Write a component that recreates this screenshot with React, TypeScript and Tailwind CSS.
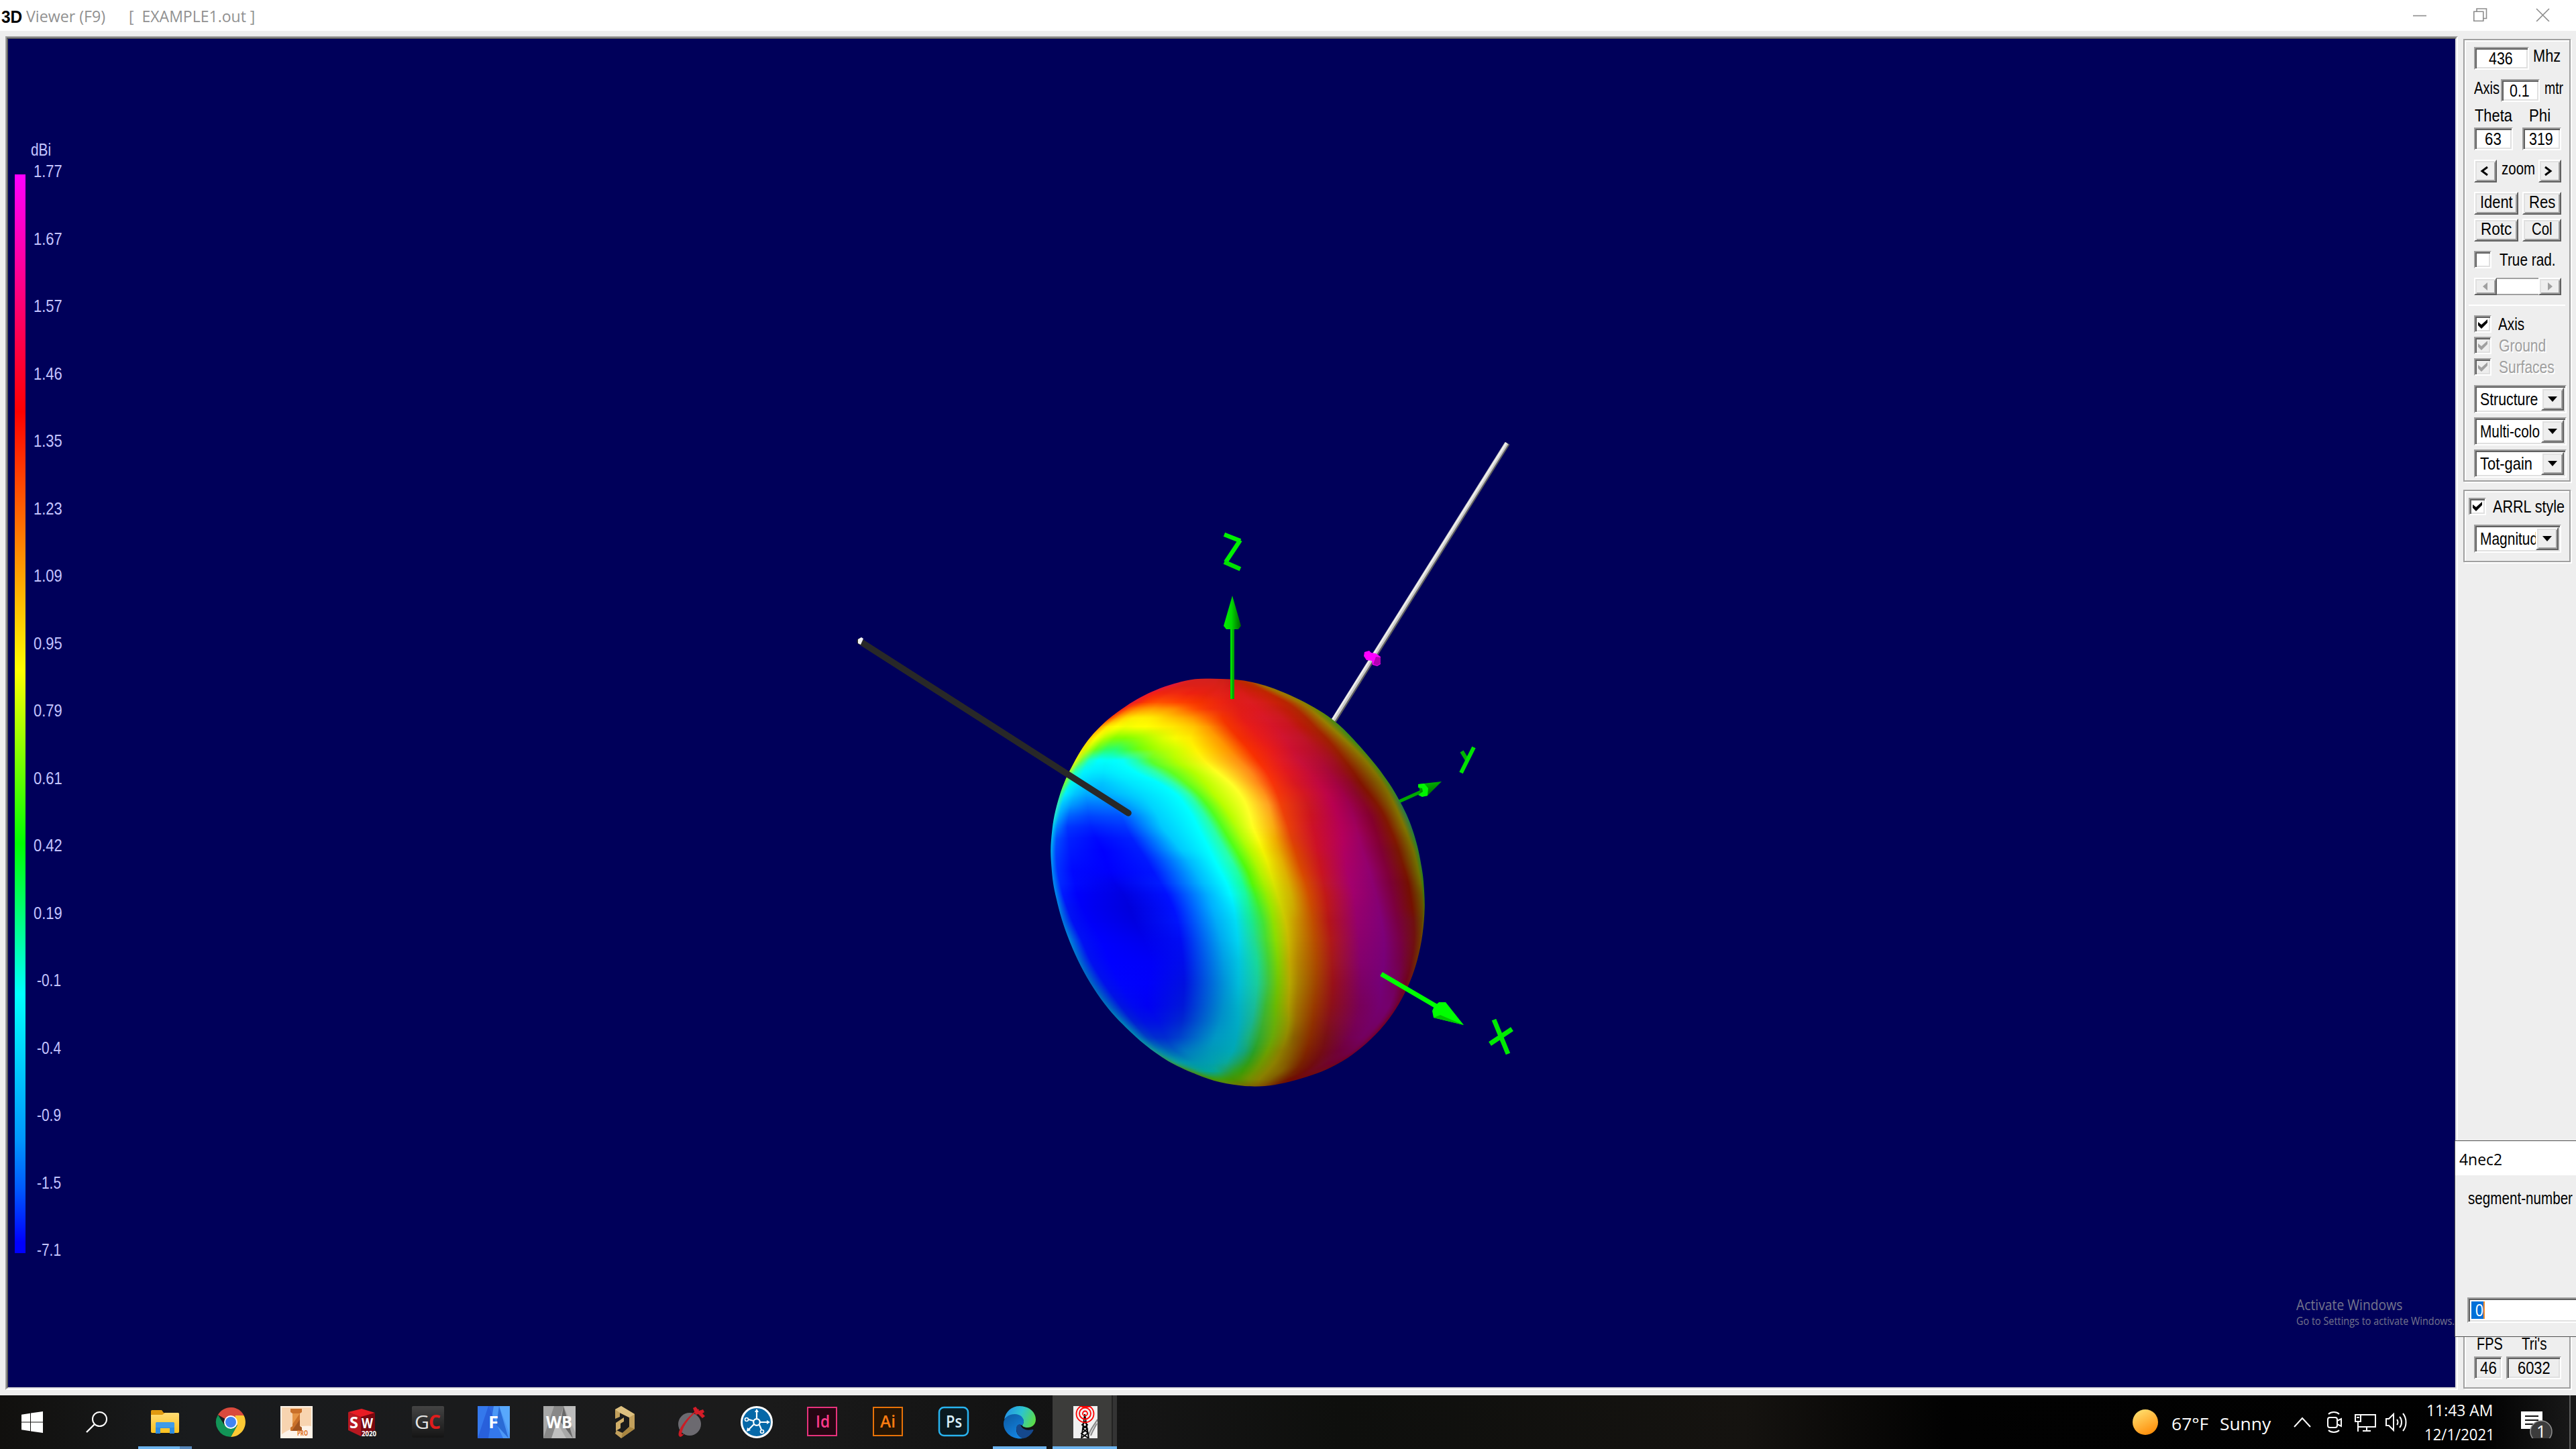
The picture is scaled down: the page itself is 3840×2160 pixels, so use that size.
import React, { useLayoutEffect, useRef, useState } from "react";

const SUNKEN =
  "border-2 border-t-[#a0a0a0] border-l-[#a0a0a0] border-r-white border-b-white shadow-[inset_2px_2px_0_#606060,inset_-2px_-2px_0_#e0e0e0]";
const RAISED =
  "border-2 border-t-white border-l-white border-r-[#606060] border-b-[#606060] shadow-[inset_2px_2px_0_#e0e0e0,inset_-2px_-2px_0_#a0a0a0] bg-[#eeeeee]";
const GROUP = "border-2 border-[#a0a0a0] shadow-[inset_2px_2px_0_#fff,2px_2px_0_#fff]";
const MS = "font-['Liberation_Sans',Arial,sans-serif] text-[25px] leading-none";
const UI = "font-['Open_Sans','Noto_Sans',sans-serif] leading-none";

/** Text condensed or stretched horizontally to an exact width. */
function Fit({ w, className = "", children }: { w: number; className?: string; children: React.ReactNode }) {
  const ref = useRef<HTMLSpanElement>(null);
  const [scale, setScale] = useState(1);
  useLayoutEffect(() => {
    if (ref.current) setScale(w / ref.current.offsetWidth);
  }, [w]);
  return (
    <span className={`block shrink-0 whitespace-pre ${className}`} style={{ width: w }}>
      <span ref={ref} className="inline-block origin-left align-top" style={{ transform: `scaleX(${scale})` }}>
        {children}
      </span>
    </span>
  );
}

/* ---------- Radiation pattern ---------- */

// Each row: y, then 20 "x:colour" stops running from the left rim to the right rim.
const ROWS: [number, string][] = [
  [30, "560:dc1838 580:d82028 600:d42020 620:d42020 640:d42020 650:d42020 660:d42020 670:d02020 680:d02020 690:d02020 700:cc2018 710:cc2018 720:c82018 735:c42018 750:bc2008 765:b82800 785:b03800 805:a85000 825:a06800 850:908000"],
  [65, "500:e01838 515:e01c30 530:e02020 550:dc2018 570:dc2018 590:dc2018 610:dc2018 630:dc2018 650:dc2018 670:dc2018 690:d82018 710:d82018 730:d41c18 750:d01c18 770:cc1c10 790:c82008 815:c02400 840:b83000 870:a06800 900:808000"],
  [100, "400:e81838 425:f01c20 450:f02410 475:f02410 500:f02810 525:f02810 550:f02410 575:ec2010 600:ec2010 625:e82010 650:e42010 680:e42018 710:e02018 750:dc1c18 790:d81c18 820:d01c10 860:c82008 895:c02400 940:a46c00 975:848400"],
  [140, "345:e81c30 375:f42810 400:fc3c00 425:ff4800 450:ff5000 475:ff4c00 500:ff4800 530:ff4000 560:fc3c00 590:f83400 620:f43000 660:f02c08 700:ec2410 760:e01c18 820:dc1c20 870:d41c18 920:c82008 965:b82400 1015:a07000 1045:788800"],
  [170, "305:f02018 335:ff6000 360:ff8400 395:ff9800 430:ffa000 460:ff9800 490:ff9400 520:ff8800 550:ff7000 580:ff5800 610:fc4400 660:f43008 710:ec2810 780:e01c18 850:dc1820 910:cc1c18 960:c01c08 1005:b02800 1060:987800 1090:688800"],
  [210, "255:ff3800 285:ff9c00 315:ffd400 350:ffec00 390:fff000 420:ffec00 450:ffe000 480:ffd000 515:ffc000 550:ffb000 590:ff9800 640:ff6c00 710:f43400 790:e41c18 880:d81828 950:cc1820 1000:bc1c08 1045:ac2400 1105:988000 1138:508810"],
  [250, "215:ff9000 245:ffec00 280:ffff00 320:f0ff00 360:fcff00 400:ffff00 435:fff800 470:fff000 510:ffe800 550:ffd800 595:ffc400 650:ff9800 735:f43400 820:e81c18 920:d41428 985:c81420 1035:b81808 1080:a82400 1145:948000 1185:408818"],
  [300, "172:ffc800 200:fcff00 235:b4ff00 275:84ff00 315:80ff00 355:90ff00 395:a8ff00 435:c4ff00 475:e0ff00 520:f8fc00 580:ffec00 690:ff9800 775:f43000 860:e81c18 960:d01430 1030:c01428 1080:b01810 1125:a02000 1195:908000 1230:348818"],
  [350, "140:ffe000 168:c8ff00 200:68ff18 240:30ff60 280:28ff70 320:40ff40 365:68ff10 410:8cff00 460:b0ff00 525:d0ff00 600:fff400 730:ff9400 815:f83000 900:e81c18 990:cc1030 1070:b81028 1120:a81418 1165:982000 1242:8c7c00 1276:348818"],
  [400, "115:f8f800 142:70ff40 172:18ffc8 210:00ffff 245:00fff8 275:00ffff 310:08fff8 360:20ffb0 420:58ff30 520:b0ff00 635:fff410 775:ff8c10 850:f83000 935:e41c20 1020:c81038 1105:b00c30 1155:a01020 1200:901c00 1285:887800 1318:308818"],
  [450, "90:c0ff10 115:28ffb0 150:00f4ff 190:00ecff 230:00e8ff 280:00f0ff 355:00ffff 435:30ffa8 500:60ff20 590:b4ff00 685:ffff20 820:ff8818 885:f83008 970:e01820 1060:c40c38 1135:a80838 1185:980c20 1235:881800 1320:847400 1352:308818"],
  [500, "72:80ff28 98:00f8e8 135:00dcff 175:00ccff 225:00c4ff 330:00e4ff 450:00fcff 510:30ffa8 560:60ff20 640:b8ff00 740:ffff28 850:ff8818 910:f83408 1000:d81820 1095:c00840 1165:a40440 1218:900828 1265:801400 1353:807000 1382:308820"],
  [550, "52:48ff60 76:00ecff 115:00c4ff 160:00a8ff 220:00a8ff 390:00dcff 520:00ffff 570:30ffa8 610:58ff20 675:b8ff00 780:ffff28 878:ff9018 930:f43808 1035:d41820 1130:bc0448 1195:a00048 1250:880828 1300:801400 1380:807000 1410:288830"],
  [600, "38:40f8b0 62:00c4ff 100:0098ff 165:0074ff 260:0078ff 420:00d4ff 558:00ffff 608:28ffa8 648:50ff20 712:b8ff00 805:ffff28 895:ffa020 945:f04008 1055:cc1820 1155:b80050 1220:9c0050 1282:880428 1335:801800 1404:807400 1430:287840"],
  [650, "30:20f0d0 52:00a4ff 90:0060ff 170:0044ff 300:0050ff 450:00d0ff 588:00ffff 640:28ffa8 680:50ff20 740:b4ff00 820:ffff28 905:fca818 960:ec4008 1065:cc1420 1175:b40054 1235:9c0058 1305:84002c 1362:801800 1424:807400 1452:287848"],
  [700, "22:00e0ec 42:0080ff 85:0034ff 180:0020ff 320:0034ff 468:00c8ff 610:00ffff 668:28ffa8 708:50ff20 765:b0ff08 832:ffff20 914:f8ac10 975:e84008 1075:cc1028 1187:b40058 1247:a0005c 1322:84002c 1382:801800 1443:807400 1470:287840"],
  [750, "18:00c8f0 40:0050ff 90:0020ff 200:0008ff 345:0020ff 505:00c8ff 633:00ffff 694:28ffa8 735:50ff18 790:b0ff08 852:fcfc10 922:f0ac00 988:e04008 1085:cc1028 1194:b4005c 1260:9c0064 1336:840030 1402:801800 1461:787000 1485:288030"],
  [800, "16:00b8f0 38:0044ff 95:0018ff 225:0000ff 375:001cff 540:00c8ff 656:00ffff 720:28ffa8 762:50ff18 816:b0fc00 870:f4f400 934:e8ac00 1002:dc4400 1092:cc1028 1200:b00060 1272:980068 1348:800034 1418:781800 1478:787000 1498:288028"],
  [850, "17:00a8f0 40:0038ff 100:0010ff 240:0000ff 405:0018ff 572:00b8ff 678:00ffff 746:28ffa8 788:50fc10 840:b0f800 888:ecf000 948:e4b000 1015:d84800 1100:c81420 1206:ac0064 1288:94006c 1360:800038 1432:781800 1490:707000 1508:288028"],
  [900, "20:0098f0 45:0030ff 105:0008ff 255:0000fc 430:0014ff 602:00b8ff 702:00ffff 770:20ffa0 812:54f808 860:b0f400 902:e4e800 962:deb000 1030:d84800 1108:c81420 1214:a80068 1302:900070 1375:800038 1446:781400 1500:6c7000 1515:288020"],
  [950, "27:0090e8 55:0028ff 115:0008ff 275:0000ec 460:001cff 630:00bcff 725:00fcff 788:18ff98 828:54f808 876:a8f000 916:d8e400 975:d8b000 1045:d44c00 1116:c41820 1226:a4006c 1314:8c0070 1385:7c0038 1458:741000 1508:6c6800 1520:308010"],
  [1000, "36:0090e8 66:0018ff 125:0000fc 310:0000e0 485:0010ff 650:00b0ff 742:00f8ff 802:18f8a0 842:44f420 888:98ec00 930:d0dc00 986:d0b000 1057:d04c00 1125:c01818 1238:a0006c 1328:880070 1394:7c003c 1466:741000 1513:685800 1524:308010"],
  [1060, "48:0088e0 84:0014f4 145:0000f8 335:0000dc 510:0010ff 668:00b0ff 755:00e8fc 814:18f098 858:40ec30 904:94e800 948:ccd000 996:cca800 1067:c84c00 1132:bc1818 1246:98006c 1340:840074 1405:7c003c 1474:741000 1516:685000 1526:407800"],
  [1120, "62:0080d8 105:0010f4 175:0000f8 355:0000e0 528:0014fc 684:00acf8 763:00dcf4 826:18e890 872:40e438 914:90e000 963:ccc400 1003:c89800 1075:c04c00 1138:b41418 1252:94006c 1350:800078 1415:780040 1480:701010 1512:684000 1524:606800"],
  [1200, "90:0088d8 140:0010f4 220:0000fc 390:0000ec 540:000cf4 702:00a8f0 770:00d4f0 838:20dc90 884:48dc30 924:8cdc00 974:c8b800 1010:c09000 1082:b84c00 1146:b01818 1260:8c006c 1360:7c0078 1425:780044 1482:701010 1508:703800 1518:706000"],
  [1300, "128:0078c8 180:0010f0 255:0000ff 420:0000f8 550:000cec 712:009ce4 774:00c4e0 848:18d898 893:44d034 932:80d000 980:c0a800 1014:b48400 1088:ac4800 1150:a41818 1266:84006c 1360:780078 1425:740048 1470:700c14 1492:703000 1502:785000"],
  [1400, "178:006cc0 235:0010ec 300:0004fc 405:0000fc 555:0010e0 714:0090d8 774:00bcd8 848:18cc9c 893:40c440 932:74c400 980:b4a800 1014:a88000 1085:a04400 1154:981018 1268:7c0064 1350:740078 1410:740058 1445:700020 1460:701018 1470:703000"],
  [1500, "240:0078b8 300:0014e0 350:0008f0 410:0000f4 550:0018d8 712:0090cc 773:00b0c8 838:18bc98 883:3cb830 925:6cb800 976:a89c00 1008:a07400 1080:983800 1148:8c1018 1262:780058 1340:740070 1380:74006c 1400:70004c 1415:700020 1425:701000"],
  [1570, "300:0080b8 350:0020d4 395:0010e4 450:0010e4 545:0028d0 700:0090c8 772:00acc4 828:18b490 872:3cb030 920:68b008 976:989400 1005:986c00 1074:903000 1138:84101c 1248:780058 1310:740068 1340:740068 1355:740050 1365:740030 1380:701010"],
  [1640, "365:0088b0 405:0040c4 440:002cd0 480:002cd0 535:0040cc 680:0098c4 764:00a8bc 812:18b080 856:30a830 910:68a808 965:908800 995:886000 1062:882c00 1125:781014 1220:740050 1270:740060 1290:740058 1305:740040 1315:740028 1325:701010"],
  [1700, "430:189890 460:0080b0 490:0068b8 520:0060c0 560:0078c0 660:0098b8 750:00a8b4 800:14a478 836:28a028 890:6ca000 945:8c7c00 985:885c00 1048:802400 1110:740c14 1175:700038 1220:700048 1235:700048 1245:700038 1255:700028 1265:700c10"],
  [1750, "500:309850 520:10a090 550:0098ac 585:0094b0 620:0098b0 670:00a0b0 725:08a89c 780:20a050 815:309c18 865:6c9800 920:8c8000 970:845800 1030:782000 1080:700c10 1120:700828 1145:700030 1160:700030 1170:700030 1180:700020 1190:700c10"],
  [1790, "570:448820 590:309840 615:10a080 640:00a498 665:00a4a0 690:08a88c 720:1ca060 755:2ca028 790:389c08 840:6c9400 890:8a8000 945:846000 1000:742000 1040:700c08 1060:700a18 1075:700a18 1085:700a18 1095:700a18 1105:700a18 1120:700c10"],
  [1825, "640:588000 655:508808 670:409808 685:3c9c10 700:3c9c10 715:3c9c08 735:409800 755:449400 780:509400 815:709000 860:888000 905:806000 950:743000 975:701400 990:700c00 1000:700a08 1010:700a08 1020:700a08 1030:700c08 1045:701000"],
  [1862, "730:706800 740:707000 750:747000 760:786c00 770:7c6c00 780:7c6c00 790:806800 800:806800 815:806400 830:806000 850:805800 870:804800 890:783800 905:702400 920:701800 930:701400 940:701400 950:701400 960:701400 970:701400"],
];

const TABLE = ROWS.map(([y, s]) => ({
  y,
  v: s.split(" ").map((t) => {
    const [x, c] = t.split(":");
    return [Number(x), parseInt(c.slice(0, 2), 16), parseInt(c.slice(2, 4), 16), parseInt(c.slice(4, 6), 16)];
  }),
}));

function sampleRow(y: number) {
  let i = 0;
  while (i < TABLE.length - 2 && TABLE[i + 1].y < y) i++;
  const a = TABLE[i];
  const b = TABLE[i + 1];
  const p = TABLE[Math.max(0, i - 1)];
  const n = TABLE[Math.min(TABLE.length - 1, i + 2)];
  const h = b.y - a.y;
  const t = Math.min(1, Math.max(0, (y - a.y) / h));
  return a.v.map((s, k) =>
    s.map((av, c) => {
      const bv = b.v[k][c];
      if (c > 0) return Math.round(av + (bv - av) * t);
      const ma = ((bv - p.v[k][c]) / (b.y - p.y)) * h;
      const mb = ((n.v[k][c] - av) / (n.y - a.y)) * h;
      const t2 = t * t;
      const t3 = t2 * t;
      return (2 * t3 - 3 * t2 + 1) * av + (t3 - 2 * t2 + t) * ma + (-2 * t3 + 3 * t2) * bv + (t3 - t2) * mb;
    })
  );
}

const RIM: [number, number][] = [
  [600, 37], [515, 57], [440, 86], [380, 118], [320, 158], [250, 215], [190, 280], [145, 345], [110, 412], [77, 485],
  [52, 560], [32, 645], [22, 720], [17, 800], [20, 875], [27, 950], [40, 1020], [62, 1113], [95, 1215], [138, 1320],
  [190, 1420], [250, 1512], [320, 1595], [400, 1675], [490, 1745], [600, 1803], [700, 1840], [800, 1857], [880, 1857],
  [960, 1843], [1050, 1815], [1130, 1782], [1215, 1730], [1290, 1665], [1360, 1585], [1420, 1490], [1465, 1390],
  [1495, 1290], [1515, 1180], [1524, 1060], [1520, 950], [1512, 880], [1496, 790], [1475, 710], [1450, 640],
  [1420, 575], [1382, 505], [1330, 425], [1265, 340], [1195, 258], [1135, 203], [1060, 152], [980, 108], [900, 73],
  [830, 51], [760, 39], [680, 35],
];

function smoothClosed(pts: [number, number][]) {
  const n = pts.length;
  let d = `M${pts[0][0]} ${pts[0][1]}`;
  for (let i = 0; i < n; i++) {
    const p0 = pts[(i - 1 + n) % n];
    const p1 = pts[i];
    const p2 = pts[(i + 1) % n];
    const p3 = pts[(i + 2) % n];
    d += `C${p1[0] + (p2[0] - p0[0]) / 6} ${p1[1] + (p2[1] - p0[1]) / 6} ${p2[0] - (p3[0] - p1[0]) / 6} ${p2[1] - (p3[1] - p1[1]) / 6} ${p2[0]} ${p2[1]}`;
  }
  return d + "Z";
}

const STRIPS = Array.from({ length: 306 }, (_, i) => {
  const y = 30 + i * 6;
  return { y, stops: sampleRow(y + 3) };
});

function Pattern() {
  return (
    <svg x={340} y={380} width={580} height={630} viewBox="0 0 1568 1890" preserveAspectRatio="none">
      <defs>
        <clipPath id="rim">
          <path d={smoothClosed(RIM)} />
        </clipPath>
        {STRIPS.map((s) => (
          <linearGradient key={s.y} id={`s${s.y}`} gradientUnits="userSpaceOnUse" x1={0} y1={0} x2={1568} y2={0}>
            {s.stops.map((c, k) => (
              <stop key={k} offset={c[0] / 1568} stopColor={`rgb(${c[1]},${c[2]},${c[3]})`} />
            ))}
          </linearGradient>
        ))}
      </defs>
      <g clipPath="url(#rim)">
        {STRIPS.map((s) => (
          <rect key={s.y} x={0} y={s.y} width={1568} height={6} fill={`url(#s${s.y})`} shapeRendering="crispEdges" />
        ))}
      </g>
    </svg>
  );
}

function Scene() {
  return (
    <svg className="absolute left-[1210px] top-[564px] h-[1040px] w-[1100px]" viewBox="0 0 1100 1040">
      <defs>
        <linearGradient id="coneZ">
          <stop offset="0" stopColor="#00f000" />
          <stop offset="0.45" stopColor="#00d800" />
          <stop offset="1" stopColor="#006000" />
        </linearGradient>
        <linearGradient id="coneY" x1="0" y1="0" x2="0.4" y2="1">
          <stop offset="0" stopColor="#00c800" />
          <stop offset="1" stopColor="#006800" />
        </linearGradient>
      </defs>
      {/* far wire with its source marker */}
      <line x1={1027.5} y1={41} x2={768.5} y2={455} stroke="#606060" strokeWidth={7} />
      <line x1={1026} y1={40.5} x2={767} y2={454} stroke="#c8c8c8" strokeWidth={6} />
      <line x1={1025.5} y1={40} x2={766} y2={453} stroke="#f0f0f0" strokeWidth={2.5} />
      <path d="M814 352l7-2 3 3 7 1 7 5v11l-5 3-7-2-1-6-8-1-4-6z" fill="#ff00ff" />
      <path d="M831 359l7 1v9l-5 3-6-2z" fill="#b400b4" />
      {/* Y axis */}
      <line x1={863} y1={576} x2={903} y2={558} stroke="#00a800" strokeWidth={5} />
      <path d="M894 549l8-1 27-3-22 22-8 0z" fill="url(#coneY)" />
      <path d="M894 549l9-1 6 7-1 11-8 2-6-3 7-5-1-5-6-1z" fill="#00f400" />
      <g stroke="#00e400" strokeWidth={6}>
        <line x1={959} y1={500} x2={967} y2={513} stroke="#00b400" />
        <line x1={977} y1={494} x2={958} y2={532} />
      </g>
      <Pattern />
      {/* near wire */}
      <line x1={62} y1={336} x2={462} y2={592} stroke="#282828" strokeWidth={9.5} strokeLinecap="round" />
      <path d="M59 333l5-3 3 2-4 9-4-2z" fill="#f0f0f0" />
      {/* Z axis */}
      <rect x={614} y={317} width={6} height={105} fill="#00a400" />
      <rect x={614} y={317} width={3} height={105} fill="#00dc00" />
      <path d="M617 268l13 45-4 5h-18l-4-5z" fill="url(#coneZ)" />
      <g stroke="#00f000" strokeWidth={6.5} strokeLinecap="square">
        <line x1={608} y1={178} x2={626} y2={185} />
        <line x1={627} y1={188} x2={609} y2={215} />
        <line x1={608} y1={219} x2={626} y2={227} stroke="#00e000" />
      </g>
      {/* X axis */}
      <line x1={839} y1={832} x2={921} y2={880} stroke="#00ff00" strokeWidth={7} />
      <path d="M925 874h10l27 34-45-11-2-10 3-7z" fill="#00ff00" />
      <path d="M917 897l45 11-35-15z" fill="#00c400" />
      <g stroke="#00ec00" strokeWidth={7}>
        <line x1={1007} y1={900} x2={1028} y2={951} />
        <line x1={1034} y1={914} x2={1001} y2={936} />
      </g>
    </svg>
  );
}

const SCALE = ["1.77", "1.67", "1.57", "1.46", "1.35", "1.23", "1.09", "0.95", "0.79", "0.61", "0.42", "0.19", "-0.1", "-0.4", "-0.9", "-1.5", "-7.1"];

function Viewer() {
  return (
    <div className="relative mt-2 ml-2 h-[2018px] w-[3656px] shrink-0 border-2 border-t-[#a0a0a0] border-l-[#a0a0a0] border-r-white border-b-white">
      <div className="h-full w-full border-2 border-t-[#606060] border-l-[#606060] border-r-[#e0e0e0] border-b-[#e0e0e0] bg-[#00005a]">
        <div className={`flex flex-col pt-[153px] text-[#c4c4ff] ${MS}`}>
          <Fit w={30} className="ml-[34px]">dBi</Fit>
          <div className="mt-[7px] flex">
            <div className="mt-[17px] ml-[10px] h-[1608px] w-4 bg-[linear-gradient(#ff00ff,#ff0000_22%,#ffff00_46%,#00ff00_62%,#00ffff_76%,#0096ff_89.5%,#005aff_94%,#0000ff_99%)]" />
            <div className="ml-[12px] flex flex-col">
              {SCALE.map((s) => (
                <div key={s} className="h-[100.5px]">
                  <Fit w={s[0] === "-" ? 36 : 43} className={s[0] === "-" ? "ml-[5px]" : "ml-0"}>{s}</Fit>
                </div>
              ))}
            </div>
          </div>
        </div>
      </div>
      <div className="absolute top-0 left-0">
        <Scene />
      </div>
      <div className={`absolute top-[1879px] left-[3413px] text-[#74748c] ${UI}`}>
        <Fit w={158} className="text-[21px]">Activate Windows</Fit>
        <Fit w={236} className="mt-[5px] text-[16px]">Go to Settings to activate Windows.</Fit>
      </div>
    </div>
  );
}

/* ---------- Classic controls ---------- */

function Field({ box, w, children }: { box: string; w: number; children: React.ReactNode }) {
  return (
    <div className={`flex h-[34px] shrink-0 items-center justify-center bg-white pr-0.5 ${box} ${SUNKEN}`}>
      <Fit w={w}>{children}</Fit>
    </div>
  );
}

function Btn({ box, w, children }: { box: string; w: number; children: React.ReactNode }) {
  return (
    <div className={`flex h-[34px] shrink-0 items-center justify-center pb-1 ${box} ${RAISED}`}>
      <Fit w={w}>{children}</Fit>
    </div>
  );
}

function Check({ on = true, off = false, w, gap = "ml-3", children }: { on?: boolean; off?: boolean; w: number; gap?: string; children: React.ReactNode }) {
  return (
    <div className={`flex items-center ${off ? "text-[#a0a0a0]" : "text-black"}`}>
      <div className={`flex h-[26px] w-[26px] shrink-0 items-center justify-center ${off ? "bg-[#eeeeee]" : "bg-white"} ${SUNKEN}`}>
        {on && (
          <svg className="h-[14px] w-[14px]" viewBox="0 0 14 14">
            <path d="M0 4l5 4 9-8v5l-9 9-5-5z" fill="currentColor" />
          </svg>
        )}
      </div>
      <Fit w={w} className={`${gap} ${off ? "[text-shadow:2px_2px_0_#fff]" : ""}`}>{children}</Fit>
    </div>
  );
}

function Select({ box, w, children }: { box: string; w: number; children: React.ReactNode }) {
  return (
    <div className={`flex h-[42px] items-stretch bg-white p-0.5 ${box} ${SUNKEN}`}>
      <div className="flex min-w-0 flex-1 items-center overflow-hidden pl-[5px]">
        <Fit w={w} className="h-[30px] pt-[3px]">{children}</Fit>
      </div>
      <div className={`flex w-[34px] shrink-0 items-center justify-center ${RAISED}`}>
        <svg className="h-2 w-[14px]" viewBox="0 0 14 8">
          <path d="M0 0h14L7 8z" fill="#000" />
        </svg>
      </div>
    </div>
  );
}

function SidePanel() {
  return (
    <div className={`ml-2 flex w-[160px] shrink-0 flex-col pt-[12px] text-black ${MS}`}>
      <div className={`flex h-[660px] shrink-0 flex-col pt-[10px] pl-[14px] ${GROUP}`}>
        <div className="flex h-[34px]">
          <Field box="w-[82px]" w={36}>436</Field>
          <Fit w={41} className="mt-px ml-[6px]">Mhz</Fit>
        </div>
        <div className="mt-[14px] flex h-[34px]">
          <Fit w={38} className="mt-px">Axis</Fit>
          <Field box="ml-[2px] w-[58px]" w={30}>0.1</Field>
          <Fit w={28} className="mt-px ml-[7px]">mtr</Fit>
        </div>
        <div className="mt-[8px] flex h-[24px]">
          <Fit w={56} className="ml-[1px]">Theta</Fit>
          <Fit w={32} className="ml-[25px]">Phi</Fit>
        </div>
        <div className="mt-[6px] flex gap-[14px]">
          <Field box="w-[58px]" w={25}>63</Field>
          <Field box="w-[58px]" w={36}>319</Field>
        </div>
        <div className="mt-[14px] flex">
          <div className={`flex h-[34px] w-[34px] items-center justify-center pr-1 ${RAISED}`}>
            <svg className="h-4 w-3" viewBox="0 0 12 16"><path d="M11 2L3 8l8 6" fill="none" stroke="#000" strokeWidth="3" /></svg>
          </div>
          <Fit w={50} className="mt-px ml-[7px]">zoom</Fit>
          <div className={`ml-[5px] flex h-[34px] w-[34px] items-center justify-center pr-1 ${RAISED}`}>
            <svg className="h-4 w-3" viewBox="0 0 12 16"><path d="M1 2l8 6-8 6" fill="none" stroke="#000" strokeWidth="3" /></svg>
          </div>
        </div>
        <div className="mt-[14px] flex gap-[6px]">
          <Btn box="w-[66px]" w={49}>Ident</Btn>
          <Btn box="w-[58px]" w={39}>Res</Btn>
        </div>
        <div className="mt-[6px] flex gap-[6px]">
          <Btn box="w-[66px]" w={46}>Rotc</Btn>
          <Btn box="w-[58px]" w={31}>Col</Btn>
        </div>
        <div className="mt-[14px]">
          <Check on={false} w={84}>True rad.</Check>
        </div>
        <div className="mt-[14px] flex h-[26px] w-[130px]">
          <div className={`flex w-[34px] items-center justify-center ${RAISED}`}>
            <svg className="h-3 w-2" viewBox="0 0 8 12"><path d="M7 0v12L0 6z" fill="#a0a0a0" /></svg>
          </div>
          <div className="flex-1 border-y-2 border-t-[#a0a0a0] border-b-[#a0a0a0] bg-white" />
          <div className={`flex w-[34px] items-center justify-center ${RAISED}`}>
            <svg className="h-3 w-2" viewBox="0 0 8 12"><path d="M1 0v12l7-6z" fill="#a0a0a0" /></svg>
          </div>
        </div>
        <div className="mt-[14px] -ml-2 h-[2px] w-[144px] shrink-0 bg-white" />
        <div className="mt-[14px] flex flex-col gap-[6px]">
          <Check w={39} gap="ml-[10px]">Axis</Check>
          <Check off w={70} gap="ml-[11px]">Ground</Check>
          <Check off w={83} gap="ml-[11px]">Surfaces</Check>
        </div>
        <div className="mt-[14px] flex flex-col gap-[6px]">
          <Select box="w-[138px]" w={86}>Structure</Select>
          <Select box="w-[138px]" w={89}>Multi-colo</Select>
          <Select box="w-[138px]" w={78}>Tot-gain</Select>
        </div>
      </div>
      <div className={`mt-[12px] flex h-[108px] shrink-0 flex-col pt-[10px] pl-[6px] ${GROUP}`}>
        <Check w={107} gap="ml-[10px]">ARRL style</Check>
        <div className="mt-[14px] ml-2">
          <Select box="w-[130px]" w={98}>Magnitude</Select>
        </div>
      </div>
      <div className={`mt-[1112px] flex h-[120px] shrink-0 flex-col pt-[39px] pl-[14px] ${GROUP}`}>
        <div className="flex h-[25px]">
          <Fit w={39} className="ml-1">FPS</Fit>
          <Fit w={38} className="ml-[28px]">Tri's</Fit>
        </div>
        <div className="mt-[6px] flex gap-[6px]">
          <div className={`flex h-[34px] w-[42px] items-center justify-center ${SUNKEN}`}>
            <Fit w={25}>46</Fit>
          </div>
          <div className={`flex h-[34px] w-[82px] items-center justify-center ${SUNKEN}`}>
            <Fit w={49}>6032</Fit>
          </div>
        </div>
      </div>
    </div>
  );
}

function SegmentDialog() {
  return (
    <div className="absolute top-[1700px] left-[3659px] h-[293px] w-[181px] overflow-hidden border-y border-l border-[#505050] bg-[#eeeeee]">
      <div className={`h-[51px] bg-white pt-[15px] pl-[6px] text-[24px] text-black ${UI}`}>
        <Fit w={64}>4nec2</Fit>
      </div>
      <div className={`pt-[22px] pl-[19px] text-black ${MS}`}>
        <Fit w={156}>segment-number</Fit>
      </div>
      <div className={`mt-[135px] ml-[18px] flex h-[38px] w-[260px] items-center bg-white pl-1 text-white ${MS} ${SUNKEN}`}>
        <div className="flex h-[26px] w-[18px] items-center justify-end bg-[#0070d8]">
          <Fit w={12}>0</Fit>
        </div>
        <div className="h-[26px] w-[2px] bg-[#ff8c28]" />
      </div>
    </div>
  );
}

function TitleBar() {
  return (
    <div className={`flex h-[46px] shrink-0 items-start bg-white text-[24px] text-[#919191] ${UI}`}>
      <Fit w={31} className="mt-[12px] ml-[2px] font-['Liberation_Sans',Arial,sans-serif] text-[26px] font-bold text-black">3D</Fit>
      <Fit w={118} className="mt-[12px] ml-[6px]">Viewer (F9)</Fit>
      <Fit w={188} className="mt-[12px] ml-[35px]">{"[  EXAMPLE1.out ]"}</Fit>
      <div className="flex-1" />
      <svg className="mt-[12px] h-5 w-[208px] shrink-0" viewBox="0 0 208 20" fill="none" stroke="#8c8c8c" strokeWidth="1.6">
        <path d="M1 11.5h20" />
        <path d="M91.8 5.2h14v14h-14zM96 5V1h14.500v14.500h-4.500" />
        <path d="M185 1l19 19M204 1l-19 19" />
      </svg>
      <div className="w-[36px]" />
    </div>
  );
}

/* ---------- Taskbar ---------- */

function Task({ children, cls = "" }: { children: React.ReactNode; cls?: string }) {
  return <div className={`relative flex h-20 w-[98px] shrink-0 items-center justify-center ${cls}`}>{children}</div>;
}

const ICON = "h-12 w-12 shrink-0 overflow-visible";
const OS = "'Open Sans','Noto Sans',sans-serif";

function Taskbar() {
  return (
    <div className="relative flex h-20 shrink-0 bg-[linear-gradient(90deg,#11100e_0,#191b1d_280px,#1b1b1b_1100px,#131313_1500px,#151515_1700px,#0e0f0d_2000px,#151310_2600px,#020202_2900px,#010101_3700px,#181818_3830px)]">
      <Task cls="pr-0.5">
        <svg className="h-8 w-8" viewBox="0 0 32 32" fill="#fff">
          <path d="M0 4.800l13-2v12.700H0zM14 2.600L32 0v15.500H14zM0 16.500h13v12.700l-13-2zM14 16.500h18V32l-18-2.600z" />
        </svg>
      </Task>
      <Task cls="pr-1.5">
        <svg className="h-8 w-8" viewBox="0 0 32 32" fill="none" stroke="#fff" strokeWidth="2">
          <circle cx="20.500" cy="11.500" r="10.500" />
          <path d="M13 19L1 31" strokeWidth="2.400" />
        </svg>
      </Task>
      <Task cls="ml-px">
        <svg className={ICON} viewBox="0 0 48 48">
          <defs><linearGradient id="fo" x1="0" y1="0" x2="0" y2="1"><stop offset="0" stopColor="#ffdc73" /><stop offset="1" stopColor="#fcc11f" /></linearGradient></defs>
          <path d="M3 8c0-1.500 1-2 2-2h14l3 4h22v6H3z" fill="#e09a10" />
          <path d="M3 13h17l4-3h19c2 0 2 1 2 2v26c0 1-1 2-2 2H5c-1 0-2-1-2-2z" fill="url(#fo)" />
          <path d="M10 41V26c0-1 1-2 2-2h24c1 0 2 1 2 2v15h-7V33h-14v8z" fill="#2f8de0" />
          <path d="M10 32v-6c0-1 1-2 2-2h24c1 0 2 1 2 2v6z" fill="#3f9bea" />
        </svg>
        <div className="absolute bottom-0 left-[9px] flex h-1 w-20"><div className="w-[62px] bg-[#6cb3ee]" /><div className="flex-1 bg-[#5585b8]" /></div>
      </Task>
      <Task>
        <svg className={ICON} viewBox="0 0 48 48">
          <path d="M24 24L4.900 13A22 22 0 0 1 43 13z" fill="#d94a3d" />
          <path d="M24 2a22 22 0 0 1 19.500 12H24z" fill="#d94a3d" />
          <path d="M43.500 14A22 22 0 0 1 24 46l9.500-17-3-15z" fill="#fcc934" />
          <path d="M4.900 13A22 22 0 0 0 24 46l9.500-17H15z" fill="#129457" />
          <circle cx="24" cy="24" r="10" fill="#fff" /><circle cx="24" cy="24" r="8" fill="#4184f3" />
        </svg>
      </Task>
      <Task>
        <svg className={ICON} viewBox="0 0 48 48">
          <path d="M0 0h48v48H0z" fill="#fdf3e8" /><path d="M2 2h44v28C34 28 16 32 2 42z" fill="#f8d4b0" />
          <path d="M15 4h17v5l-3 2v19l3 2v5H15v-5l3-2V11l-3-2z" fill="#c9702a" /><path d="M18 11h11L18 27z" fill="#e59446" />
          <path d="M29 20v10l3 2v5H17z" fill="#a05420" />
          <text x="25" y="44" fontSize="10" fontWeight="700" fill="#e07020" fontFamily={OS} textLength="16" lengthAdjust="spacingAndGlyphs">PRO</text>
        </svg>
      </Task>
      <Task>
        <svg className={ICON} viewBox="0 0 48 48">
          <path d="M3 9L23 4l20 6-20 7z" fill="#e81c24" /><path d="M3 9l19 7v29L3 36z" fill="#b81820" /><path d="M22 16l21-6v26L22 45z" fill="#780810" />
          <text x="5" y="33" fontSize="24" fontWeight="700" fill="#fff" fontFamily={OS} textLength="13" lengthAdjust="spacingAndGlyphs">S</text>
          <text x="23" y="33" fontSize="22" fontWeight="700" fill="#fff" fontFamily={OS} textLength="17" lengthAdjust="spacingAndGlyphs">W</text>
          <text x="23" y="45" fontSize="11" fontWeight="700" fill="#fff" fontFamily={OS} textLength="22" lengthAdjust="spacingAndGlyphs">2020</text>
        </svg>
      </Task>
      <Task>
        <svg className={ICON} viewBox="0 0 48 48">
          <defs><linearGradient id="gc" x1="0" y1="0" x2="0" y2="1"><stop offset="0" stopColor="#444" /><stop offset="1" stopColor="#151515" /></linearGradient></defs>
          <rect width="48" height="47" rx="2" fill="url(#gc)" />
          <text x="4" y="34" fontSize="28" fill="#e4e4e4" fontFamily={OS} textLength="22" lengthAdjust="spacingAndGlyphs">G</text>
          <text x="25" y="34" fontSize="28" fontWeight="700" fill="#e01c1c" fontFamily={OS} textLength="18" lengthAdjust="spacingAndGlyphs">C</text>
        </svg>
      </Task>
      <Task>
        <svg className={ICON} viewBox="0 0 48 48">
          <path d="M0 0h48v48H0z" fill="#3478ec" /><path d="M16 0h16L48 30v18H38z" fill="#4c98f6" /><path d="M32 0h16v42z" fill="#58a8fc" /><path d="M16 0h8l-8 48H0z" fill="#2456d4" opacity=".7" /><path d="M32 0l14 48-18-20z" fill="#1c58c8" opacity=".7" />
          <text x="16" y="33" fontSize="25" fontWeight="700" fill="#fff" fontFamily={OS} textLength="15" lengthAdjust="spacingAndGlyphs">F</text>
        </svg>
      </Task>
      <Task>
        <svg className={ICON} viewBox="0 0 48 48">
          <path d="M0 0h48v48H0z" fill="#a8a8a8" /><path d="M16 0h14l-14 48H0z" fill="#888" /><path d="M30 0h18v40z" fill="#bcbcbc" /><path d="M30 0l14 48-18-24z" fill="#686868" /><path d="M20 24l14 24H12z" fill="#c0c0c0" />
          <text x="4" y="33" fontSize="25" fontWeight="700" fill="#fff" fontFamily={OS} textLength="39" lengthAdjust="spacingAndGlyphs">WB</text>
        </svg>
      </Task>
      <Task>
        <svg className={ICON} viewBox="0 0 48 48">
          <path d="M9 5l9-5 20 12v22L18 48l-9-7 2-5 9 4 10-9V17L16 10v6l-7 3z" fill="#c2a05c" />
          <path d="M9 5l9-5 20 12-8 5-14-7z" fill="#dcc080" /><path d="M18 48l20-14-8-3-10 9z" fill="#a88540" />
          <path d="M10 32v-7l12-8v6l-5 3v7l-7 4z" fill="#d0ae68" />
        </svg>
      </Task>
      <Task>
        <svg className={ICON} viewBox="0 0 48 48">
          <ellipse cx="22" cy="27" rx="17" ry="17" fill="#6c6a70" />
          <path d="M36 5C24 10 6 32 6 42c0 5 4 4 7 0-2 1-4 1-3-3 2-10 14-26 26-34z" fill="#cc1c24" stroke="#cc1c24" />
          <path d="M27 3l4-2 5 6 6-2 2 4-3 2 4 4-4 3-6-6-4 1z" fill="#d41c28" />
        </svg>
      </Task>
      <Task>
        <svg className={ICON} viewBox="0 0 48 48" fill="none" stroke="#fff" strokeWidth="2.200">
          <circle cx="24" cy="24" r="22.500" fill="#0668a8" strokeWidth="3" />
          <circle cx="24" cy="24" r="4.800" />
          <path d="M24 19V7M29 24h13M20 27l-9 9M28 28l3 7M19 22l-7-2" />
          <path d="M24 4l3 5h-6zM44 24l-5 3v-6zM9 38l1-6 5 4z" fill="#fff" stroke="none" />
          <circle cx="9" cy="20" r="2.500" strokeWidth="1.600" /><circle cx="32" cy="38" r="2.500" strokeWidth="1.600" />
        </svg>
      </Task>
      <Task>
        <svg className={ICON} viewBox="0 0 48 48">
          <rect x="2" y="2" width="43" height="42" fill="#240612" stroke="#e8327c" strokeWidth="2" />
          <text x="14" y="32" fontSize="26" fontWeight="600" fill="#ff3a8c" fontFamily={OS} textLength="21" lengthAdjust="spacingAndGlyphs">Id</text>
        </svg>
      </Task>
      <Task>
        <svg className={ICON} viewBox="0 0 48 48">
          <rect x="2" y="2" width="43" height="42" fill="#261504" stroke="#e87208" strokeWidth="2" />
          <text x="12" y="32" fontSize="25" fontWeight="600" fill="#ff7c10" fontFamily={OS} textLength="23" lengthAdjust="spacingAndGlyphs">Ai</text>
        </svg>
      </Task>
      <Task>
        <svg className={ICON} viewBox="0 0 48 48">
          <rect x="2" y="2" width="43" height="42" rx="7" fill="#0a1a20" stroke="#28b4f0" strokeWidth="2.500" />
          <text x="12" y="32" fontSize="25" fontWeight="600" fill="#d8f0fc" fontFamily={OS} textLength="24" lengthAdjust="spacingAndGlyphs">Ps</text>
        </svg>
      </Task>
      <Task>
        <svg className={ICON} viewBox="0 0 48 48">
          <defs>
            <linearGradient id="e1" x1="0" y1="0.300" x2="1" y2="0.600"><stop offset="0" stopColor="#2490e8" /><stop offset=".5" stopColor="#2cc4d0" /><stop offset="1" stopColor="#5cdc48" /></linearGradient>
            <linearGradient id="e2" x1="0" y1="0" x2="0.600" y2="1"><stop offset="0" stopColor="#0c58a0" /><stop offset="1" stopColor="#1484e0" /></linearGradient>
          </defs>
          <path d="M1 20C3 8 12 0 24 0c14 0 24 9 24 20 0 8-6 12-12 12-5 0-8-2-8-3s2-3 2-6c0-5-5-9-12-9C9 14 3 17 1 20z" fill="url(#e1)" />
          <path d="M0 26C0 18 7 12 17 12c8 0 13 5 13 11 0 3-2 5-2 6-5-3-9 1-9 6 0 7 5 12 11 13C14 51 0 40 0 26z" fill="url(#e2)" />
          <path d="M19 33c0-4 3-6 6-6 1 5 6 11 18 8 2 0 2 1 1 2-3 6-9 11-15 11-6-1-10-7-10-15z" fill="#15488c" />
        </svg>
        <div className="absolute bottom-0 left-[9px] h-1 w-20 bg-[#6cb3ee]" />
      </Task>
      <div className="relative flex h-20 w-[96px] shrink-0 items-center pl-[31px] bg-[linear-gradient(90deg,#3c3c3a_88px,#222_88px,#222_90px,#343434_90px)]">
        <svg className="h-12 w-9" viewBox="0 0 36 48" fill="none">
          <path d="M0 0h36v48H0z" fill="#f0f0f0" />
          <path d="M22 46C24 36 30 30 36 20M26 44c3-8 6-12 9-18" stroke="#888" strokeWidth="2" />
          <path d="M17 12L12 48M17 12l6 36M15 22l6 6-7 6 8 6-9 7M19 22l-6 6 8 6-9 7 11 7" stroke="#000" strokeWidth="1.800" />
          <circle cx="17.500" cy="11" r="3.500" stroke="#f00" strokeWidth="1.800" /><circle cx="17.500" cy="11" r="8.500" stroke="#f00" strokeWidth="1.800" /><circle cx="17.500" cy="11.500" r="13" stroke="#f00" strokeWidth="1.800" />
          <path d="M12 0h12v2H12z" fill="#f00" />
        </svg>
        <div className="absolute bottom-0 left-0 h-1 w-full bg-[#6cb3ee]" />
      </div>
      <div className="flex-1" />
      <div className={`flex h-20 shrink-0 items-center text-[26px] text-white ${UI}`}>
        <svg className="h-[38px] w-[38px]" viewBox="0 0 38 38">
          <defs><linearGradient id="sun" x1="0.200" y1="0" x2="0.700" y2="1"><stop offset="0" stopColor="#ffe070" /><stop offset="1" stopColor="#ff8c08" /></linearGradient></defs>
          <circle cx="19" cy="19" r="19" fill="url(#sun)" />
        </svg>
        <Fit w={55} className="ml-[20px] pt-1">67°F</Fit>
        <Fit w={76} className="ml-[17px] pt-1">Sunny</Fit>
        <svg className="ml-[34px] h-4 w-[26px]" viewBox="0 0 26 16" fill="none" stroke="#fff" strokeWidth="2"><path d="M1 15L13 2l12 13" /></svg>
        <svg className="ml-[23px] h-8 w-6" viewBox="0 0 24 32" fill="none" stroke="#fff" strokeWidth="2">
          <rect x="2" y="9" width="14" height="15" rx="3" /><path d="M16 14l6-3v11l-6-3M3 4c4-4 12-4 16 0M3 28c4 4 12 4 16 0" />
        </svg>
        <svg className="ml-[18px] h-8 w-8" viewBox="0 0 32 32" fill="none" stroke="#fff" strokeWidth="2">
          <path d="M10 5h21v18H6M1 5h8v10H1zM5 15v15M3 9h4M18 23v5M12 29h12" />
        </svg>
        <svg className="ml-[14px] h-8 w-9" viewBox="0 0 36 32" fill="none" stroke="#fff" strokeWidth="2">
          <path d="M1 11h4l7-7v24l-7-7H1zM17 12c2 2 2 6 0 8M21 8c4 4 4 12 0 16M26 3c6 7 6 19 0 26" />
        </svg>
        <div className="ml-[21px] flex w-[106px] flex-col items-center gap-[12px] text-[24px]">
          <Fit w={99}>11:43 AM</Fit>
          <Fit w={105}>12/1/2021</Fit>
        </div>
        <div className="relative ml-[39px] h-12 w-[50px]">
          <svg className="h-12 w-[50px]" viewBox="0 0 50 48">
            <path d="M0 8h32v26H20l-6 6v-6H0z" fill="#fff" />
            <path d="M6 15h20M6 21h20M6 27h12" stroke="#111" strokeWidth="2" />
            <circle cx="30" cy="38" r="16" fill="#3c3c3c" stroke="#909090" strokeWidth="1.500" />
          </svg>
          <span className="absolute top-[25px] left-[23px] w-[14px] text-center text-[25px]">1</span>
        </div>
        <div className="ml-[22px] h-20 w-[2px] bg-[#5c5c5c]" />
        <div className="w-[8px]" />
      </div>
    </div>
  );
}

export default function App() {
  return (
    <div className="relative flex h-[2160px] w-[3840px] flex-col overflow-hidden bg-[#eeeeee]">
      <TitleBar />
      <div className="flex h-[2034px] shrink-0">
        <Viewer />
        <SidePanel />
      </div>
      <Taskbar />
      <SegmentDialog />
    </div>
  );
}
